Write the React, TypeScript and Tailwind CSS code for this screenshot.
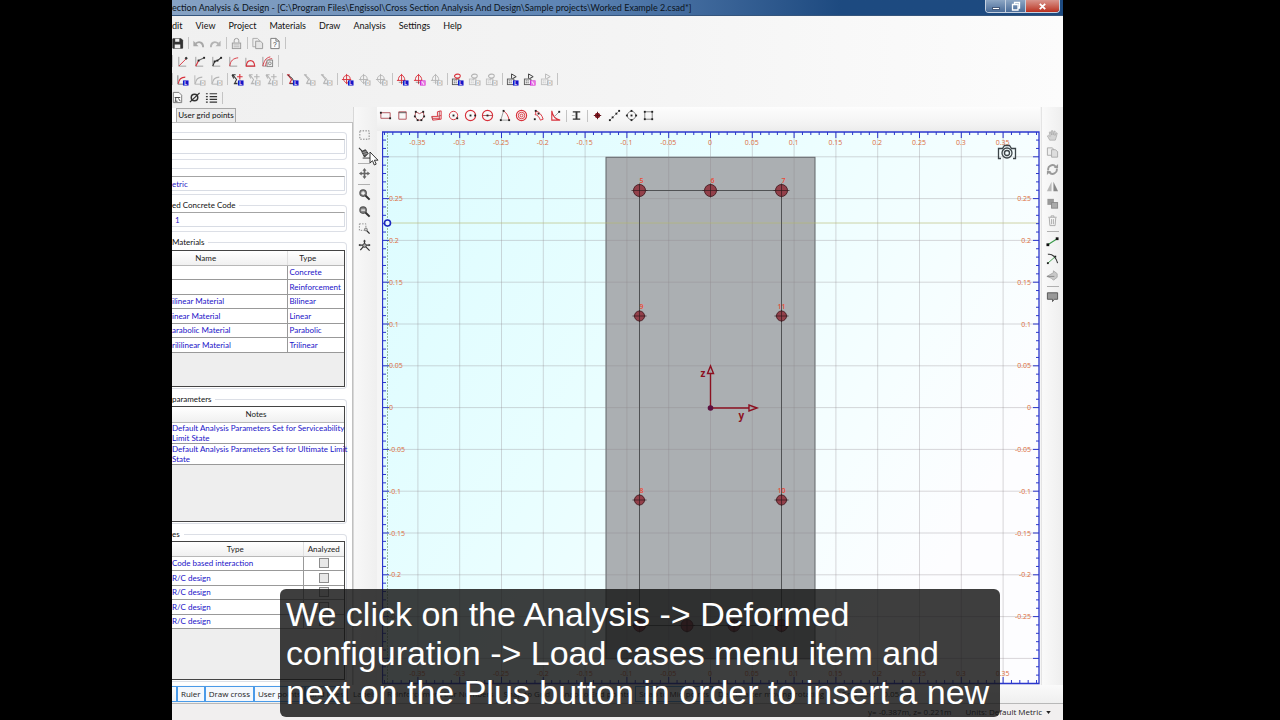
import type { ReactNode } from "react";

const RED = "#d8323c";
const DARK = "#333333";
const GRAY = "#b4b4b4";

type IconProps = { label: string; children: ReactNode };

function ToolButton({ label, children }: IconProps) {
  return (
    <button type="button" aria-label={label} title={label} className="flex size-[17px] shrink-0 items-center justify-center">
      <svg viewBox="0 0 14 14" className="size-[13px]" fill="none" stroke={DARK} strokeWidth="1">
        {children}
      </svg>
    </button>
  );
}

function Sep() {
  return (
    <span className="flex w-1 shrink-0 justify-center">
      <span className="h-3 w-px bg-[#c4c4c4]" />
    </span>
  );
}

function HSep() {
  return (
    <span className="flex h-1 w-full shrink-0 items-center justify-center">
      <span className="h-px w-3 bg-[#b0b0b0]" />
    </span>
  );
}

/* ---------- analysis toolbar ---------- */

type Tone = "blue" | "pink" | "gray";
const badgeFill: Record<Tone, string> = { blue: "#1414c8", pink: "#d428d4", gray: "#b8b8b8" };
const badgeText: Record<Tone, string> = { blue: "L", pink: "N", gray: "D" };

function Badge({ tone }: { tone: Tone }) {
  return (
    <g stroke="none">
      <rect x="7.5" y="8" width="6" height="5.5" fill={badgeFill[tone]} />
      <text x="9" y="12.6" fontSize="5" fontFamily="Liberation Sans, sans-serif" fontWeight="700" fill="#fff">
        {badgeText[tone]}
      </text>
    </g>
  );
}

function Shape({ kind, tone, first }: { kind: string; tone: Tone; first: boolean }) {
  const on = tone !== "gray";
  const main = on ? RED : GRAY;
  const ink = on ? DARK : GRAY;
  switch (kind) {
    case "curve":
      return (
        <>
          <path d="M2 2.500v9.500h6" stroke={on ? "#777" : GRAY} />
          <path d="M2.500 11.500C3 7 5 4.500 10 4.500" stroke={main} strokeWidth="1.200" />
        </>
      );
    case "sigma":
      return (
        <>
          <path d="M1 2h4M2 2l4 5-2 4h3M1 2l2 4M3 11.500h4" stroke={ink} strokeWidth="1.100" />
          <path d="M9.500 1v6M6.500 4h6" stroke={first ? RED : GRAY} strokeWidth="1.200" />
        </>
      );
    case "diag":
      return (
        <>
          <path d="M1 2h3M2 2l4 5-2 4h4" stroke={main} strokeWidth="1.200" />
          <path d="M2 2l5 4 1 3M4 11.500h4" stroke={ink} />
        </>
      );
    case "target":
      return (
        <>
          <path d="M3 4.500c1.500-2.500 5.500-2.500 6.500 0s0 5-3 6.500c-3-1-4.500-4-3.500-6.500z" stroke={main} />
          <path d="M6 1v11M1 7h10" stroke={main} />
        </>
      );
    case "half":
      return (
        <>
          <path d="M1 8h9M6 1v11M2.500 8c0-3 1-5 3.500-6 2 1 3.500 3 3.500 6" stroke={main} />
          <path d="M3 10h5" stroke={ink} strokeOpacity="0.500" />
        </>
      );
    case "calcLoop":
      return (
        <>
          <rect x="1.500" y="6.500" width="7" height="6" stroke={ink} strokeOpacity="0.800" />
          <path d="M3 8.500h4M3 10.500h4" stroke={ink} strokeDasharray="1 1" />
          <path d="M4 2.500c2-2 6-1.500 6 .5s-2 3-3.500 2.500S3 4 4 2.500zM8 5l-3 2" stroke={main} strokeWidth="1.200" />
        </>
      );
    default:
      return (
        <>
          <rect x="1.500" y="6.500" width="7" height="6" stroke={ink} strokeOpacity="0.800" />
          <path d="M3 8.500h4M3 10.500h4" stroke={ink} strokeDasharray="1 1" />
          <path d="M6 6V1l5 3-4 2" stroke={ink} />
        </>
      );
  }
}

const analysisGroups: { kind: string; name: string; tones: Tone[] }[] = [
  { kind: "curve", name: "Moment curvature", tones: ["blue", "gray", "gray"] },
  { kind: "sigma", name: "Stress and strain", tones: ["blue", "gray", "gray"] },
  { kind: "diag", name: "Deformed configuration", tones: ["blue", "gray", "gray"] },
  { kind: "target", name: "Interaction surface", tones: ["blue", "gray", "gray"] },
  { kind: "half", name: "Interaction curve", tones: ["blue", "pink", "gray"] },
  { kind: "calcLoop", name: "Code based interaction", tones: ["blue", "gray", "gray"] },
  { kind: "calcFlag", name: "Design", tones: ["blue", "pink", "gray"] },
];

function AnalysisBar() {
  return (
    <div className="-ml-[2px] flex h-[18px] items-center">
      <Sep />
      {analysisGroups.map((g) => (
        <span key={g.kind} className="flex items-center">
          {g.tones.map((t, i) => (
            <ToolButton key={i} label={`${g.name} ${i + 1}`}>
              <Shape kind={g.kind} tone={t} first={i === 0} />
              <Badge tone={t} />
            </ToolButton>
          ))}
          <Sep />
        </span>
      ))}
    </div>
  );
}

function FileBar() {
  return (
    <div className="-ml-[3px] flex h-[18px] items-center">
      <ToolButton label="Save">
        <path d="M2 2h9l1.500 1.500V12H2z" fill="#333" />
        <path d="M4.500 2h4.500v3h-4.500zM4 8h6v4H4z" fill="#eee" stroke="none" />
      </ToolButton>
      <Sep />
      <ToolButton label="Undo">
        <path d="M12 11c0-5-4-7-8-4" stroke="#a8a8a8" strokeWidth="2" />
        <path d="M1.500 4v6h5.500z" fill="#a8a8a8" stroke="none" />
      </ToolButton>
      <ToolButton label="Redo">
        <path d="M2 11c0-5 4-7 8-4" stroke="#b4b4b4" strokeWidth="2" />
        <path d="M12.500 4v6H7z" fill="#b4b4b4" stroke="none" />
      </ToolButton>
      <Sep />
      <ToolButton label="Lock">
        <path d="M4.500 6V4a2.500 2.500 0 0 1 5 0v2" stroke="#999" />
        <rect x="2.500" y="6.500" width="9" height="6" stroke="#999" fill="#e4e4e4" />
        <path d="M4 8.500h6M4 10.500h6" stroke="#bbb" />
      </ToolButton>
      <Sep />
      <ToolButton label="Copy">
        <path d="M2 1.500h5l2 2v7H2z" fill="#eee" stroke="#aaa" />
        <path d="M5 4.500h5l2.500 2v6H5z" fill="#e6e6e6" stroke="#999" />
      </ToolButton>
      <ToolButton label="Report">
        <path d="M3 1.500h5.500L12 4.500v8H3z" fill="#fafafa" stroke="#777" />
        <path d="M8.500 1.500v3H12" stroke="#777" />
        <text x="5.500" y="11" fontSize="7" fontFamily="Liberation Sans, sans-serif" fill="#333" stroke="none">?</text>
      </ToolButton>
      <Sep />
    </div>
  );
}

function DiagramBar() {
  const axes = <path d="M3 2v10h8" stroke="#999" />;
  return (
    <div className="-ml-[2px] flex h-[18px] items-center">
      <Sep />
      <ToolButton label="Linear diagram">
        {axes}
        <path d="M3 12l8-8" stroke={RED} />
        <circle cx="11" cy="3.500" r="1" fill={DARK} />
      </ToolButton>
      <ToolButton label="Bilinear diagram">
        {axes}
        <path d="M3 12l3-6" stroke={RED} strokeWidth="1.200" />
        <path d="M6 6l6-3" stroke="#666" strokeWidth="1.200" />
        <Dots points={[[6, 6], [12, 3]]} />
      </ToolButton>
      <ToolButton label="Trilinear diagram">
        {axes}
        <path d="M3 12l2-5 3-1 4-3" strokeWidth="1.200" />
        <Dots points={[[5, 7], [8, 6], [12, 3]]} />
      </ToolButton>
      <ToolButton label="Parabolic diagram">
        {axes}
        <path d="M3 12C3.500 6 7 3.500 12 3" stroke={RED} />
      </ToolButton>
      <ToolButton label="Arc diagram">
        <path d="M2 3v9h10" stroke="#999" />
        <path d="M2.500 12C3 4 11 4 11.500 12z" stroke={RED} strokeWidth="1.200" />
      </ToolButton>
      <ToolButton label="Material library">
        <path d="M2 2v10h4" stroke="#999" />
        <path d="M2 12C3 7 5 3 10 2M5 12C5 7 8 4 12 4" stroke={RED} />
        <rect x="6.500" y="5.500" width="6" height="7" fill="#eee" stroke="#888" />
        <circle cx="9.500" cy="9" r="1.500" stroke="#888" />
      </ToolButton>
      <Sep />
    </div>
  );
}

function ReportBar() {
  return (
    <div className="-ml-[3px] flex h-[19px] items-center">
      <ToolButton label="Export text">
        <path d="M2.500 1.500h6l3 3v8h-9z" fill="#fafafa" stroke="#777" />
        <path d="M4 7h6M4 11h3M5 7v4M8 8l2 3" stroke="#444" />
      </ToolButton>
      <ToolButton label="Bar diameter">
        <circle cx="7" cy="7" r="3.500" strokeWidth="1.600" />
        <path d="M2 12L12.500 2" strokeWidth="1.400" />
      </ToolButton>
      <ToolButton label="List">
        <path d="M5 3h8M5 6h8M5 9h8M5 12h8" strokeWidth="1.200" />
        <path d="M1 3h2M1 6h2M1 9h2M1 12h2" strokeWidth="1.200" />
      </ToolButton>
      <Sep />
    </div>
  );
}

function Dots({ points }: { points: [number, number][] }) {
  return (
    <g fill="#222" stroke="none">
      {points.map(([x, y]) => (
        <rect key={`${x}-${y}`} x={x - 1} y={y - 1} width="2" height="2" />
      ))}
    </g>
  );
}

function DrawBar() {
  const soft = "#b05058";
  return (
    <div className="flex h-[17px] items-center bg-linear-to-b from-[#fdfdfd] to-[#f3f3f3]">
      <ToolButton label="Rectangle by corners">
        <path d="M2 4h10v6H2z" stroke={soft} />
        <Dots points={[[2, 4], [12, 10]]} />
      </ToolButton>
      <ToolButton label="Rectangle">
        <path d="M3 3h8v8H3z" stroke={soft} />
        <path d="M3 4h8" stroke="#555" />
      </ToolButton>
      <ToolButton label="Polygon">
        <path d="M3 3l4 2 4-2 1 5-3 4H5L2 8z" stroke={soft} />
        <Dots points={[[3, 3], [11, 3], [12, 8], [9, 12], [5, 12], [2, 8]]} />
      </ToolButton>
      <ToolButton label="Wall shape">
        <path d="M2 8h6V3l4-1v9l-9 1zM8 8l4-1M3 10h8" stroke={RED} />
        <path d="M2 8l1 4M10 2v9" stroke={soft} />
      </ToolButton>
      <ToolButton label="Circle by center">
        <circle cx="7" cy="7" r="4.500" stroke={RED} />
        <Dots points={[[7, 7], [11, 10]]} />
      </ToolButton>
      <ToolButton label="Circle by diameter">
        <circle cx="7" cy="7" r="5.500" stroke={RED} strokeWidth="1.200" />
        <Dots points={[[7, 7], [12, 7]]} />
      </ToolButton>
      <ToolButton label="Circle by three points">
        <circle cx="7" cy="7" r="5.500" stroke={RED} strokeWidth="1.200" />
        <path d="M2 7h10" stroke={soft} />
        <Dots points={[[7, 7]]} />
      </ToolButton>
      <ToolButton label="Circular segment">
        <path d="M6 2L3 12h9" stroke="#999" />
        <path d="M12 12C11 7 9 4 6 2" stroke={RED} />
        <Dots points={[[6, 2], [3, 12], [12, 12]]} />
      </ToolButton>
      <ToolButton label="Ring">
        <circle cx="7" cy="7" r="5.500" stroke={RED} strokeWidth="1.200" />
        <circle cx="7" cy="7" r="3.500" stroke={RED} />
        <circle cx="7" cy="7" r="1.500" stroke={RED} />
      </ToolButton>
      <ToolButton label="Ring sector">
        <path d="M4 2c4 1 7 5 8 9M3 6c3 0 5 3 6 6M4 2v4M9 12l3-1" stroke={RED} />
        <Dots points={[[4, 2], [3, 11], [7, 5]]} />
      </ToolButton>
      <ToolButton label="Fillet">
        <path d="M3 2v10h9C7 11 4 8 3 2" stroke={RED} strokeWidth="1.200" />
        <path d="M6 8l5-5" stroke="#999" />
        <Dots points={[[11, 3]]} />
      </ToolButton>
      <Sep />
      <ToolButton label="Steel profile">
        <path d="M3 3h8M3 11h8" strokeWidth="1.400" />
        <path d="M7 3v8" strokeWidth="2" />
        <path d="M2 7h3" stroke="#aaa" />
      </ToolButton>
      <Sep />
      <ToolButton label="Single bar">
        <circle cx="7" cy="7" r="2.500" fill="#8a1c24" stroke="#8a1c24" />
        <path d="M7 3v8M3 7h8" stroke="#5a1018" />
      </ToolButton>
      <ToolButton label="Bars on line">
        <path d="M2 12L12 2" stroke="#aaa" />
        <Dots points={[[2, 12], [5, 9], [9, 5], [12, 2]]} />
      </ToolButton>
      <ToolButton label="Bars on circle">
        <circle cx="7" cy="7" r="4.500" stroke="#777" />
        <Dots points={[[7, 2], [12, 7], [7, 12], [2, 7], [7, 7]]} />
      </ToolButton>
      <ToolButton label="Bars on rectangle">
        <path d="M3 3h8v8H3z" stroke="#777" />
        <Dots points={[[3, 3], [11, 3], [3, 11], [11, 11]]} />
      </ToolButton>
    </div>
  );
}

function Magnifier({ sign }: { sign: string }) {
  return (
    <>
      <circle cx="5.500" cy="5.500" r="3.500" fill="#888" stroke="#555" strokeWidth="1.200" />
      <path d="M8 8l4.500 4.500" strokeWidth="2.200" />
      <path d={sign} stroke="#fff" strokeWidth="1.200" />
    </>
  );
}

function ViewTools() {
  return (
    <div className="flex w-[24px] shrink-0 flex-col items-center border-l border-[#d8d8d8] bg-linear-to-r from-[#f8f8f8] to-[#efefef] pt-[20px] pr-[3px]">
      <ToolButton label="Select window">
        <rect x="2" y="2" width="10" height="9" stroke="#777" strokeDasharray="1.500 1.500" />
      </ToolButton>
      <ToolButton label="Deselect">
        <path d="M1 2l4 4" strokeWidth="1.200" />
        <path d="M4 6l4-2 3 4-4 4z" fill="#555" />
        <path d="M5 7l4-1M6 9l4-1" stroke="#ddd" strokeWidth="0.600" />
        <path d="M5 13h8" />
      </ToolButton>
      <HSep />
      <ToolButton label="Pan">
        <path d="M7 3v8M3 7h8" stroke="#666" strokeWidth="1.800" />
        <path d="M7 1l2.200 3H4.800zM7 13l2.200-3H4.800zM1 7l3-2.200v4.400zM13 7l-3-2.200v4.400z" fill="#666" stroke="none" />
      </ToolButton>
      <HSep />
      <ToolButton label="Zoom in">
        <Magnifier sign="M3.500 5.500h4M5.500 3.500v4" />
      </ToolButton>
      <ToolButton label="Zoom out">
        <Magnifier sign="M3.500 5.500h4" />
      </ToolButton>
      <ToolButton label="Zoom window">
        <path d="M1.500 2h7v7h-7z" stroke="#888" strokeDasharray="1.500 1.500" />
        <circle cx="8.500" cy="8" r="1.500" stroke="#777" fill="#ccc" />
        <path d="M9.500 9.500l3 3" strokeWidth="1.400" />
      </ToolButton>
      <ToolButton label="Zoom extents">
        <circle cx="7" cy="7" r="2" fill="#aaa" />
        <path d="M7 1v4M1 6.500h4M9 6.500h4M5.500 8.500L2.500 12M8.500 8.500l4 4" strokeWidth="1.300" />
        <path d="M7 0.500l1.500 2.200h-3zM13.500 6.500l-2-1.500v3zM.5 6.500l2-1.500v3z" fill="#444" stroke="none" />
      </ToolButton>
    </div>
  );
}

function EditTools() {
  const g = "#aaaaaa";
  return (
    <div className="flex w-[22px] shrink-0 flex-col items-center border-l border-[#e4e4e4] bg-linear-to-r from-[#fafafa] to-[#eeeeee] pt-[20px]">
      <ToolButton label="Move">
        <path d="M4 12L1.500 7.500l1-.8L4.500 8 3.500 3.500l1.200-.5L6 6.500V1.800h1.300l.4 4.700 1-4.300 1.200.2-.3 4.600 1.400-3 1.100.5L11 9l-1 3z" fill="#d4d4d4" stroke={g} strokeWidth="0.800" />
      </ToolButton>
      <ToolButton label="Duplicate">
        <path d="M1.500 2h5l1.500 1v7H1.500z" fill="#eee" stroke={g} />
        <path d="M6 4h4l2.500 2v6H6z" fill="#ddd" stroke={g} />
      </ToolButton>
      <ToolButton label="Rotate">
        <path d="M2.500 8a4.500 4.500 0 0 1 8-3.800M11.500 6a4.500 4.500 0 0 1-8 3.800" stroke="#999" strokeWidth="2" />
        <path d="M8.500 5.500h4.500v-4.500zM5.500 8.500H1v4.500z" fill="#999" stroke="none" />
      </ToolButton>
      <ToolButton label="Mirror">
        <path d="M6 2v10H1z" fill="#b8b8b8" stroke="none" />
        <path d="M8 2v10h5z" fill="#888" stroke="none" />
      </ToolButton>
      <ToolButton label="Merge">
        <rect x="1.500" y="2" width="7" height="6.500" fill="#999" stroke="none" />
        <rect x="6" y="6" width="6.500" height="6" fill="#ababab" stroke="#888" />
      </ToolButton>
      <ToolButton label="Delete">
        <path d="M2.500 3.500h9M5.500 3.500v-1.500h3v1.500M3.500 4l.7 8.500h5.600l.7-8.500M6 5.500v5.500M8 5.500v5.500" stroke={g} />
      </ToolButton>
      <HSep />
      <ToolButton label="Line guide">
        <path d="M2 10.500l10-6.500" stroke="#3a9a4a" strokeWidth="1.200" />
        <g fill="#111" stroke="none">
          <rect x="0.500" y="9" width="3" height="3" />
          <rect x="10.500" y="2.500" width="3" height="3" />
        </g>
      </ToolButton>
      <ToolButton label="Arc guide">
        <path d="M2 2.500c5-1 9 3.500 10.500 9.500" strokeWidth="1.200" />
        <path d="M2 12l8-7" stroke="#3a9a4a" />
        <Dots points={[[2, 12], [10, 5]]} />
      </ToolButton>
      <ToolButton label="Polyline guide">
        <path d="M1 8l7-4V2l4 3v4l-4 3-2-2z" fill="#c8c8c8" stroke={g} />
        <path d="M1 8l8 0" stroke="#888" />
      </ToolButton>
      <HSep />
      <ToolButton label="Comment">
        <path d="M1.500 3h11v7H9l-2 2.500V10H1.500z" fill="#999" stroke="#555" />
      </ToolButton>
    </div>
  );
}

/* ---------- drawing canvas ---------- */

const OX = 710.5;
const OY = 407.6;
const UNIT = 41.8;
const majors = [-7, -6, -5, -4, -3, -2, -1, 0, 1, 2, 3, 4, 5, 6, 7];
const rows = [-6, -5, -4, -3, -2, -1, 0, 1, 2, 3, 4, 5, 6];
const fmt = (n: number) => String(Math.round(n * 5) / 100);

const bars: { x: number; y: number; r: number; n?: string }[] = [
  { x: 639.5, y: 190.5, r: 6, n: "5" },
  { x: 710.5, y: 190.5, r: 6, n: "6" },
  { x: 781.5, y: 190.5, r: 6, n: "7" },
  { x: 639.5, y: 316, r: 5, n: "9" },
  { x: 781.5, y: 316, r: 5, n: "11" },
  { x: 639.5, y: 500, r: 5, n: "8" },
  { x: 781.5, y: 500, r: 5, n: "10" },
  { x: 639.5, y: 625.5, r: 6 },
  { x: 687, y: 625.5, r: 6 },
  { x: 734, y: 625.5, r: 6 },
  { x: 781.5, y: 625.5, r: 6 },
];

function Canvas() {
  const tx: number[] = [];
  for (let i = -39; i <= 39; i++) tx.push(i);
  const ty: number[] = [];
  for (let i = -32; i <= 32; i++) ty.push(i);
  return (
    <svg viewBox="382 131 658 554" className="block w-full" fontFamily="Open Sans, sans-serif" fontSize="7" role="img" aria-label="Cross section drawing">
      <defs>
        <linearGradient id="sky" x1="0" y1="0" x2="1" y2="0.500">
          <stop offset="0" stopColor="#dcfcff" />
          <stop offset="0.450" stopColor="#e9feff" />
          <stop offset="0.800" stopColor="#f6feff" />
          <stop offset="1" stopColor="#fdfdff" />
        </linearGradient>
      </defs>
      <rect x="382.500" y="132" width="656.500" height="551.500" fill="url(#sky)" />
      <rect x="606" y="157.300" width="209" height="501.500" fill="#abafb2" stroke="#606468" />
      <g stroke="#8c8488" strokeOpacity="0.320" strokeWidth="1">
        {majors.map((m) => (
          <path key={m} d={`M${OX + m * UNIT} 132V683`} />
        ))}
        {rows.map((m) => (
          <path key={m} d={`M383 ${OY - m * UNIT}H1039`} />
        ))}
      </g>
      <path d="M383 223H1039" stroke="#b4b86a" strokeOpacity="0.600" />
      <path d="M387.500 132V683" stroke="#9cbc9c" strokeDasharray="2 1" />
      <g stroke="#2a36cc">
        <path d="M382.500 132H1039V683.500H382.500z" fill="none" strokeWidth="1.300" />
        {tx.map((i) => {
          const len = i % 5 === 0 ? 6 : 3;
          const x = OX + (i * UNIT) / 5;
          return <path key={i} d={`M${x} 132v${len}M${x} 683v${-len}`} />;
        })}
        {ty.map((i) => {
          const len = i % 5 === 0 ? 6 : 3;
          const y = OY - (i * UNIT) / 5;
          return <path key={i} d={`M383 ${y}h${len}M1039 ${y}h${-len}`} />;
        })}
      </g>
      <g fill="#dc6c3c">
        {majors.map((m) => (
          <g key={m} textAnchor="middle">
            <text x={OX - 0.500 + m * UNIT} y="144.500">{fmt(m)}</text>
            <text x={OX - 0.500 + m * UNIT} y="675.500">{fmt(m)}</text>
          </g>
        ))}
        {rows.filter((m) => Math.abs(m) < 6).map((m) => (
          <g key={m}>
            <text x="389" y={OY + 2.500 - m * UNIT}>{fmt(m)}</text>
            <text x="1031" y={OY + 2.500 - m * UNIT} textAnchor="end">{fmt(m)}</text>
          </g>
        ))}
      </g>
      <rect x="639.500" y="190.500" width="142" height="435" fill="none" stroke="#505254" />
      {bars.map((b) => (
        <g key={`${b.x}-${b.y}`}>
          <circle cx={b.x} cy={b.y} r={b.r} fill="#93404a" stroke="#4e2228" />
          <path d={`M${b.x - b.r - 2} ${b.y}h${2 * b.r + 4}M${b.x} ${b.y - b.r - 1}v${2 * b.r + 2}`} stroke="#33181c" strokeWidth="0.700" />
          {b.n && (
            <text x={b.x + (b.n.length > 1 ? 0 : 2)} y={b.y - (b.r > 5 ? 8 : 7)} textAnchor="middle" fontWeight="600" fill="#ec4a34">
              {b.n}
            </text>
          )}
        </g>
      ))}
      <g stroke="#8c1020" strokeWidth="1.400" fill="none">
        <path d="M710.500 408V373M710.500 366l-3 7.500h6zM710.500 408H749M757 408l-8-3v6z" />
      </g>
      <circle cx="710.500" cy="408" r="2.800" fill="#5c1040" />
      <text x="700.500" y="377" fontSize="10" fontWeight="700" fill="#8c1020">z</text>
      <text x="738.500" y="419" fontSize="10" fontWeight="700" fill="#8c1020">y</text>
      <circle cx="387.500" cy="223" r="3" fill="#e8f8ff" stroke="#1c28c0" strokeWidth="1.600" />
    </svg>
  );
}

/* ---------- left panel ---------- */

function Group({ title, children, className }: { title?: string; children: ReactNode; className: string }) {
  return (
    <fieldset className={`relative mr-[5px] min-w-0 rounded-r-sm border border-l-0 border-[#dcdfe6] pr-px ${className}`}>
      {title && <legend className="absolute top-0 left-0 -mt-[6px] bg-white pr-1 leading-[11px]">{title}</legend>}
      {children}
    </fieldset>
  );
}

function PanelInput({ label, value }: { label: string; value: string }) {
  return (
    <input
      aria-label={label}
      defaultValue={value}
      className="block h-[15px] w-full border border-l-0 border-[#d8dce4] border-t-[#a4a4a4] bg-white text-[#2a22c4] outline-none"
    />
  );
}

const th = "border-b border-[#b8b8b8] bg-linear-to-b from-white to-[#f0f0f0] p-0 font-normal text-[#222]";
const td = "border-b border-[#999] p-0";

const materials: [string, string][] = [
  ["", "Concrete"],
  ["", "Reinforcement"],
  ["ilinear Material", "Bilinear"],
  ["inear Material", "Linear"],
  ["arabolic Material", "Parabolic"],
  ["rililinear Material", "Trilinear"],
];

const cases = ["Code based interaction", "R/C design", "R/C design", "R/C design", "R/C design"];

function LeftPanel() {
  return (
    <div className="flex w-[181px] shrink-0 flex-col pt-px font-[Lato,sans-serif] text-[8px] text-[#111]">
      <div className="flex h-[14px] shrink-0">
        <button type="button" aria-label="Properties" className="w-[4px] bg-white" />
        <button type="button" className="w-[60px] border border-b-0 border-[#a8a8a8] bg-[#ebebeb] leading-[13px] whitespace-nowrap">User grid points</button>
      </div>
      <div className="flex grow flex-col border-t border-r border-[#c0c0c0] bg-white">
        <Group className="mt-[9px] h-[28px] pt-[6px]">
          <PanelInput label="Name" value="" />
        </Group>
        <Group className="mt-[8px] h-[27px] pt-[7px]">
          <PanelInput label="Units" value="etric" />
        </Group>
        <Group title="ed Concrete Code" className="mt-[10px] h-[27px] pt-[6px]">
          <div className="[&>input]:pl-[3px]">
            <PanelInput label="Selected Concrete Code" value="1" />
          </div>
        </Group>
        <Group title="Materials" className="mt-[10px] h-[147px] pt-[7px]">
          <div className="h-[137px] border border-l-0 border-[#444] bg-[#eeeeee]">
            <table className="w-full table-fixed border-collapse leading-[10px]">
              <thead>
                <tr className="h-[14px]">
                  <th className={`${th} pr-[47px]`}>Name</th>
                  <th className={`${th} w-[57px] border-l border-l-[#e0e0e0] pr-4`}>Type</th>
                </tr>
              </thead>
              <tbody className="bg-white text-[#1a12c8]">
                {materials.map(([name, type]) => (
                  <tr key={type} className="h-[15px] odd:h-[14px]">
                    <td className={td}>{name}</td>
                    <td className={`${td} border-l border-l-[#999] pl-0.5`}>{type}</td>
                  </tr>
                ))}
              </tbody>
            </table>
          </div>
        </Group>
        <Group title="parameters" className="mt-[10px] h-[125px] pt-[6px]">
          <div className="h-[116px] border border-l-0 border-[#444] bg-[#eeeeee]">
            <table className="w-full table-fixed border-collapse">
              <thead>
                <tr className="h-[15px]">
                  <th className={`${th} pr-1 leading-[10px]`}>Notes</th>
                </tr>
              </thead>
              <tbody className="bg-white leading-[10px] whitespace-nowrap text-[#1a12c8]">
                <tr>
                  <td className={td}>Default Analysis Parameters Set for Serviceability<br />Limit State</td>
                </tr>
                <tr>
                  <td className={td}>Default Analysis Parameters Set for Ultimate Limit<br />State</td>
                </tr>
              </tbody>
            </table>
          </div>
        </Group>
        <Group title="es" className="mt-[10px] h-[148px] pt-[6px]">
          <div className="h-[139px] border border-l-0 border-[#444] bg-[#eeeeee]">
            <table className="w-full table-fixed border-collapse leading-[10px]">
              <thead>
                <tr className="h-[14px]">
                  <th className={`${th} pr-1`}>Type</th>
                  <th className={`${th} w-[41px] border-l border-l-[#e0e0e0]`}>Analyzed</th>
                </tr>
              </thead>
              <tbody className="bg-white text-[#1a12c8]">
                {cases.map((c, i) => (
                  <tr key={i} className="h-[15px] odd:h-[14px]">
                    <td className={td}>{c}</td>
                    <td className={`${td} border-l border-l-[#999]`}>
                      <input type="checkbox" aria-label={`${c} ${i + 1} analyzed`} className="mx-auto block size-[10px] appearance-none border border-[#8c8c8c] bg-[#e8e8e8]" />
                    </td>
                  </tr>
                ))}
              </tbody>
            </table>
          </div>
        </Group>
      </div>
    </div>
  );
}

/* ---------- window frame ---------- */

function TitleBar() {
  return (
    <header className="flex h-[16px] shrink-0 items-start justify-between border-b border-[#35557c] bg-linear-to-r from-[#86a2c4] via-[#5d84b4] via-45% to-[#1d4a80] to-75%">
      <h1 className="font-[Lato,sans-serif] text-[9px] leading-[15px] whitespace-nowrap text-[#0c1420]">
        ection Analysis &amp; Design - [C:\Program Files\Engissol\Cross Section Analysis And Design\Sample projects\Worked Example 2.csad*]
      </h1>
      <div className="mr-[3px] flex h-[13px] shrink-0 overflow-hidden rounded-b-sm border border-t-0 border-[#c4d0e0]">
        <button type="button" aria-label="Minimize" className="flex w-[20px] items-center justify-center border-r border-[#c4d0e0] bg-linear-to-b from-[#8da6c4] to-[#4a6c98]">
          <span className="mt-1 h-[3px] w-2 border border-[#44597a] bg-white" />
        </button>
        <button type="button" aria-label="Restore" className="flex w-[20px] items-center justify-center border-r border-[#c4d0e0] bg-linear-to-b from-[#8da6c4] to-[#4a6c98]">
          <svg viewBox="0 0 10 10" className="size-[10px]" fill="none" stroke="#fff" strokeWidth="1.300">
            <path d="M3.500 3V1.500h5V7H7M1.500 3.500H7V9H1.500z" />
          </svg>
        </button>
        <button type="button" aria-label="Close" className="flex w-[33px] items-center justify-center bg-linear-to-b from-[#d8948c] to-[#b82c1c]">
          <svg viewBox="0 0 10 10" className="size-[9px]" fill="none" stroke="#fff" strokeWidth="2">
            <path d="M2 2l6 6M8 2L2 8" />
          </svg>
        </button>
      </div>
    </header>
  );
}

const menus = ["View", "Project", "Materials", "Draw", "Analysis", "Settings", "Help"];

function MenuBar() {
  return (
    <nav className="flex h-[18px] shrink-0 items-center gap-[13px] pt-px font-[Lato,sans-serif] text-[9px] text-[#111]">
      <button type="button">dit</button>
      {menus.map((m) => (
        <button key={m} type="button">{m}</button>
      ))}
    </nav>
  );
}

const toggles: [string, boolean][] = [
  ["Ruler", true],
  ["Draw cross", true],
  ["User points", true],
  ["Grid lines", true],
  ["Labels", false],
  ["Reinforcement bar Numbers", false],
  ["Snap to Grid", false],
  ["Snap to End points", false],
  ["Snap to Mid points", true],
  ["Delete after moving/rotating", false],
];

function ToggleBar() {
  return (
    <div className="flex h-[19px] shrink-0 items-center overflow-hidden border-b border-[#b8b8b8] bg-linear-to-b from-[#fafafa] to-[#efefef] text-[8px] whitespace-nowrap text-[#1c1c1c]">
      <button type="button" aria-label="Grid" className="h-[16px] w-[5px] border border-l-0 border-[#4a9ae8]" />
      {toggles.map(([name, on]) =>
        on ? (
          <button key={name} type="button" className="h-[16px] border border-[#4a9ae8] bg-[#f4f8fd] px-[3px]">{name}</button>
        ) : (
          <button key={name} type="button" className="h-[16px] px-[5px]">{name}</button>
        ),
      )}
      <label className="flex items-center gap-2 pl-3">
        Grid size:
        <input defaultValue="0.05" className="w-[20px] bg-transparent outline-none" />
      </label>
      <span>m</span>
    </div>
  );
}

function Caption() {
  return (
    <p className="absolute bottom-[3px] left-[280px] w-[720px] rounded-md bg-[#141414]/82 px-[6px] pt-[6px] pb-[5px] font-['Liberation_Sans',sans-serif] text-[34px] leading-[39px] whitespace-nowrap text-white">
      We click on the Analysis -&gt; Deformed
      <br />
      configuration -&gt; Load cases menu item and
      <br />
      next on the Plus button in order to insert a new
    </p>
  );
}

export default function App() {
  return (
    <div className="relative min-h-screen overflow-hidden bg-black pr-[217px] pl-[172px] font-['Open_Sans',sans-serif]">
      <main className="flex min-h-screen flex-col overflow-hidden bg-linear-to-r from-[#f0f0f0] via-[#f4f4f4] to-[#fcfcfc]">
        <TitleBar />
        <MenuBar />
        <div className="flex flex-col">
          <FileBar />
          <DiagramBar />
          <AnalysisBar />
          <ReportBar />
        </div>
        <div className="flex grow">
          <LeftPanel />
          <ViewTools />
          <section className="relative min-w-0 grow bg-[#f5f5f5] pr-px">
            <DrawBar />
            <div className="h-[7px] bg-linear-to-b from-[#f3f3f3] to-[#ececec]" />
            <div className="pl-[5px]">
              <Canvas />
            </div>
            <svg viewBox="0 0 20 16" className="absolute top-[37px] right-[24px] h-[16px] w-[20px]" fill="none" stroke="#3c4448" strokeWidth="1.300">
              <path d="M4 14.500H1.500V4.500h4L7.500 1.500h5l2 3h4v10H16" />
              <circle cx="10" cy="9" r="5" />
              <circle cx="10" cy="9" r="2.500" />
            </svg>
            <svg viewBox="0 0 10 15" className="absolute top-[44px] -left-[8px] h-[15px] w-[10px]" fill="#fff" stroke="#222" strokeWidth="0.900">
              <path d="M1 1v11l2.500-2.300L5.300 14l1.900-.9-1.800-3.900H9z" />
            </svg>
          </section>
          <EditTools />
        </div>
        <ToggleBar />
        <footer className="flex h-[16px] shrink-0 items-center justify-end gap-[14px] bg-[#f1efef] pr-[12px] text-[8px] text-[#222]">
          <span>y= -0.387m, z= 0.221m</span>
          <button type="button" className="flex items-center gap-1">
            Units: Default Metric
            <svg viewBox="0 0 6 4" className="h-[3px] w-[5px]" fill="#222">
              <path d="M0 0h6L3 4z" />
            </svg>
          </button>
        </footer>
      </main>
      <Caption />
    </div>
  );
}
